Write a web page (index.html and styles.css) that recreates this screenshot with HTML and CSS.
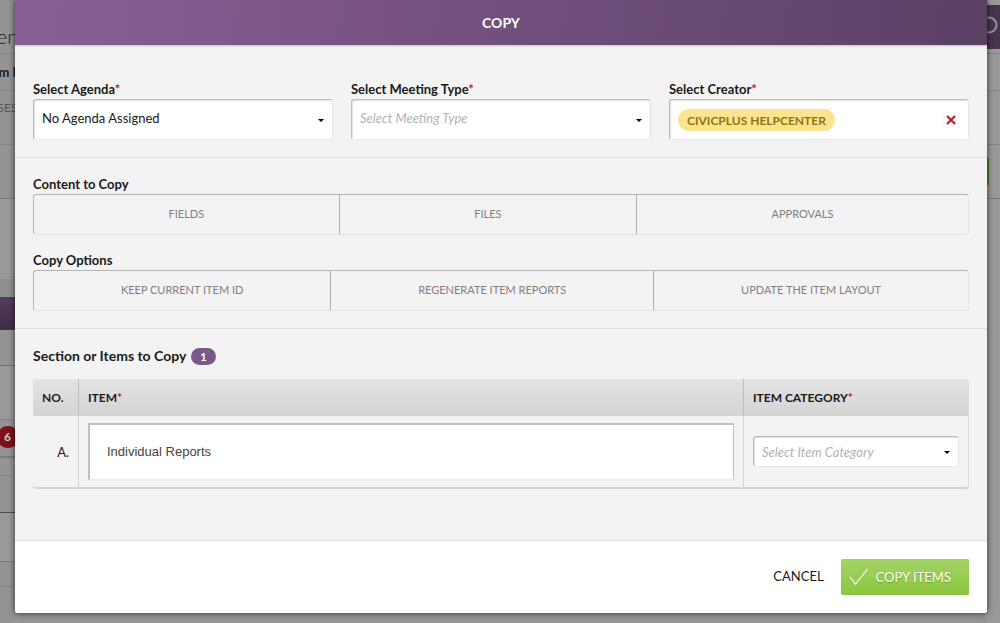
FILE: index.html
```html
<!DOCTYPE html>
<html lang="en">
<head>
  <meta charset="UTF-8">
  <meta name="viewport" content="width=device-width, initial-scale=1.0">
  <title>Copy</title>
  <link rel="stylesheet" href="styles.css">
</head>
<body>
  <div class="page">
    <div class="page-left">
      <div class="strip strip-title">en</div>
      <div class="strip strip-name">m I</div>
      <div class="strip strip-tabs">SES</div>
      <div class="strip strip-tools"></div>
      <div class="strip strip-body"></div>
      <div class="strip strip-purple"></div>
      <div class="strip strip-row"></div>
      <div class="strip strip-space"></div>
      <div class="strip strip-card"><span class="alert">6</span></div>
      <div class="strip strip-thin"></div>
      <div class="strip strip-dark"></div>
      <div class="strip strip-tall"></div>
      <div class="strip strip-last"></div>
    </div>
    <div class="page-right">
      <div class="strip strip-top">
        <svg width="13" height="44" viewBox="0 0 13 44"><circle cx="2" cy="20" r="7.500" fill="none" stroke="#96949a" stroke-width="2"/></svg>
      </div>
      <div class="strip strip-name"></div>
      <div class="strip strip-tabs"></div>
      <div class="strip strip-tools"><span class="green-edge"></span></div>
    </div>
  </div>

  <form class="modal">
    <h1 class="modal-header">COPY</h1>

    <div class="section fields">
      <div class="field">
        <label for="agenda">Select Agenda<span class="required">*</span></label>
        <div class="select-box">
          <select id="agenda">
            <option>No Agenda Assigned</option>
          </select>
        </div>
      </div>
      <div class="field">
        <label for="meeting">Select Meeting Type<span class="required">*</span></label>
        <div class="select-box">
          <select id="meeting" class="placeholder">
            <option>Select Meeting Type</option>
          </select>
        </div>
      </div>
      <div class="field">
        <span class="label" id="creator">Select Creator<span class="required">*</span></span>
        <div class="creator-box" role="group" aria-labelledby="creator">
          <span class="tag">CIVICPLUS HELPCENTER</span>
          <button type="button" class="clear" aria-label="Clear">
            <svg width="10" height="10" viewBox="0 0 10 10"><path d="M1 1L9 9M9 1L1 9" stroke="#c4161c" stroke-width="2"/></svg>
          </button>
        </div>
      </div>
    </div>

    <div class="section options">
      <div class="field">
        <span class="label" id="content">Content to Copy</span>
        <div class="toggle-group" role="group" aria-labelledby="content">
          <button type="button">FIELDS</button>
          <button type="button">FILES</button>
          <button type="button">APPROVALS</button>
        </div>
      </div>
      <div class="field">
        <span class="label" id="copy-options">Copy Options</span>
        <div class="toggle-group" role="group" aria-labelledby="copy-options">
          <button type="button">KEEP CURRENT ITEM ID</button>
          <button type="button">REGENERATE ITEM REPORTS</button>
          <button type="button">UPDATE THE ITEM LAYOUT</button>
        </div>
      </div>
    </div>

    <div class="section items">
      <h2>Section or Items to Copy <span class="count">1</span></h2>
      <table>
        <thead>
          <tr>
            <th class="col-no">NO.</th>
            <th>ITEM<span class="required">*</span></th>
            <th class="col-category">ITEM CATEGORY<span class="required">*</span></th>
          </tr>
        </thead>
        <tbody>
          <tr>
            <td class="col-no">A.</td>
            <td><input type="text" class="item-name" value="Individual Reports" aria-label="Item"></td>
            <td>
              <div class="select-box small">
                <select class="placeholder" aria-label="Item Category">
                  <option>Select Item Category</option>
                </select>
              </div>
            </td>
          </tr>
        </tbody>
      </table>
    </div>

    <div class="modal-footer">
      <button type="button" class="cancel">CANCEL</button>
      <button type="submit" class="submit">
        <svg width="20" height="18" viewBox="0 0 20 18"><path d="M1 9L6.500 16L18.500 1" fill="none" stroke="#ffffff" stroke-width="1.200"/></svg>
        COPY ITEMS
      </button>
    </div>
  </form>
</body>
</html>
```

FILE: styles.css
```css
* {
  box-sizing: border-box;
}

body {
  margin: 0;
  min-height: 100vh;
  background: #949494;
  color: #1a1a1a;
  font-family: Lato, "Liberation Sans", sans-serif;
  font-size: 13px;
  overflow: hidden;
}

button, input, select {
  font-family: inherit;
  font-size: 13px;
  color: inherit;
}

/* dimmed page behind the dialog */
.page {
  display: flex;
  justify-content: space-between;
}

.page-left {
  width: 15px;
}

.page-right {
  width: 13px;
  min-height: 100vh;
  background: #999999;
}

.strip {
  display: flex;
  justify-content: center;
  align-items: center;
  border-bottom: 1px solid #848484;
  white-space: nowrap;
}

.strip-title {
  height: 54px;
  padding-top: 18px;
  font-size: 20px;
  font-weight: 300;
}

.strip-top {
  height: 54px;
  padding-top: 5px;
  align-items: flex-start;
}

.strip-top svg {
  background: #47354f;
}

.strip-name {
  height: 37px;
  font-weight: bold;
}

.strip-tabs {
  height: 54px;
  padding-top: 9px;
  align-items: flex-start;
  font-size: 12px;
  color: #555555;
}

.strip-tools {
  height: 54px;
  justify-content: flex-start;
  border-color: #777777;
}

.green-edge {
  width: 2px;
  height: 27px;
  background: #55822a;
}

.strip-body {
  height: 98px;
  border: 0;
  background: linear-gradient(#999999 80px, #8f8f8f 80px);
}

.strip-purple {
  height: 33px;
  border: 0;
  background: linear-gradient(#533b5c, #402d47);
}

.strip-row {
  height: 36px;
  border-color: #707070;
}

.strip-space {
  height: 54px;
  background: #999999;
}

.strip-card {
  height: 38px;
  padding-bottom: 2px;
  border-bottom: 2px solid #7b7b7b;
}

.alert {
  flex: none;
  width: 22px;
  height: 22px;
  border-radius: 50%;
  background: #7d1118;
  color: #cccccc;
  font-size: 12px;
  font-weight: bold;
  line-height: 22px;
  text-align: center;
}

.strip-thin {
  height: 18px;
}

.strip-dark {
  height: 37px;
  border-color: #4c4c4c;
}

.strip-tall {
  height: 49px;
  background: #999999;
  border-color: #777777;
}

.strip-last {
  height: 25px;
}

/* dialog */
.modal {
  position: absolute;
  top: 0;
  left: 15px;
  right: 13px;
  background: #f3f3f3;
  border-radius: 0 0 3px 3px;
  box-shadow: 0 0 6px rgba(0, 0, 0, 0.7);
}

.modal-header {
  margin: 0;
  background: linear-gradient(100deg, #895f98, #5b4064);
  box-shadow: 0 1px 2px rgba(0, 0, 0, 0.2);
  color: #ffffff;
  font-size: 14px;
  line-height: 45px;
  text-align: center;
}

.section {
  padding: 16px 18px 17px;
  border-bottom: 1px solid #dcdcdc;
}

.section.fields {
  display: grid;
  grid-template-columns: repeat(3, 1fr);
  gap: 18px;
  padding-top: 34px;
}

.section.options {
  display: flex;
  flex-direction: column;
  gap: 15px;
}

.section.items {
  padding: 15px 18px 51px;
}

label, .label {
  display: block;
  line-height: 20px;
  font-weight: bold;
}

.required {
  color: #c4161c;
}

.select-box {
  position: relative;
}

.select-box::after {
  content: '';
  position: absolute;
  top: calc(50% - 1px);
  right: 9px;
  border: 3px solid transparent;
  border-top-color: #000000;
  border-bottom: 0;
}

select, .creator-box {
  width: 100%;
  height: 41px;
  padding: 0 8px;
  border: 1px solid #bcbcbc;
  border-right-color: #e4e4e4;
  border-bottom-color: #e9e9e9;
  border-radius: 3px;
  background: #ffffff;
  box-shadow: inset 1px 1px 1px rgba(0, 0, 0, 0.12);
}

select {
  display: block;
  appearance: none;
  padding-bottom: 3px;
}

.small select {
  height: 31px;
  padding-bottom: 0;
}

.placeholder {
  color: #b3b3b3;
  font-style: italic;
}

.creator-box {
  display: flex;
  justify-content: space-between;
  align-items: center;
}

.tag {
  padding: 2px 9px 0;
  border-radius: 11px;
  background: #fce390;
  color: #93740c;
  font-size: 12px;
  font-weight: bold;
  line-height: 20px;
}

.clear {
  display: flex;
  justify-content: center;
  align-items: center;
  width: 18px;
  height: 18px;
  padding: 0;
  border: 0;
  border-radius: 50%;
  background: #fafafa;
}

.toggle-group {
  display: flex;
  border: 1px solid #b5b5b5;
  border-right-color: #e4e4e4;
  border-bottom-color: #e4e4e4;
  border-radius: 3px;
}

.toggle-group button {
  flex: 1 1 auto;
  height: 39px;
  padding: 0 0 2px;
  border: 0;
  background: none;
  color: #808080;
  font-size: 11px;
}

.toggle-group button + button {
  border-left: 1px solid #b0b0b0;
}

h2 {
  display: flex;
  align-items: center;
  gap: 5px;
  margin: 0 0 11px;
  font-size: 14px;
  line-height: 24px;
}

.count {
  padding: 1px 9px 0;
  border-radius: 9px;
  background: #7a5888;
  color: #ffffff;
  font-size: 11px;
  line-height: 16px;
}

table {
  width: 100%;
  border: 1px solid #dddddd;
  border-width: 0 1px 2px 0;
  border-bottom-color: #d3d3d3;
  border-radius: 3px;
  border-spacing: 0;
}

th {
  height: 37px;
  padding: 0 9px;
  background: linear-gradient(#e4e4e4, #d3d3d3);
  font-size: 12px;
  text-align: left;
}

td {
  height: 71px;
  padding: 0 9px;
}

th + th, td + td {
  border-left: 1px solid #d3d3d3;
}

th + th {
  border-color: #bfbfbf;
}

.col-no {
  width: 45px;
}

td.col-no {
  text-align: right;
}

.col-category {
  width: 225px;
}

.item-name {
  display: block;
  width: 100%;
  height: 57px;
  padding: 0 17px 2px;
  border: 2px solid #bfbfbf;
  border-width: 2px 1px 1px 2px;
  border-bottom-color: #ececec;
  background: #ffffff;
  color: #444444;
  font-family: "Liberation Sans", Arial, sans-serif;
}

.modal-footer {
  display: flex;
  justify-content: flex-end;
  align-items: center;
  gap: 17px;
  padding: 18px;
  border-radius: 0 0 3px 3px;
  background: #ffffff;
}

.cancel {
  padding: 0 0 2px;
  border: 0;
  background: none;
}

.submit {
  display: flex;
  align-items: center;
  gap: 7px;
  height: 36px;
  padding: 0 18px 1px 8px;
  border: 0;
  border-radius: 2px;
  background: linear-gradient(#a5d367, #8cc63e);
  box-shadow: inset 0 0 1px #78ae32;
  color: #ffffff;
  text-shadow: 0 1px 1px rgba(0, 0, 0, 0.25);
}
```
